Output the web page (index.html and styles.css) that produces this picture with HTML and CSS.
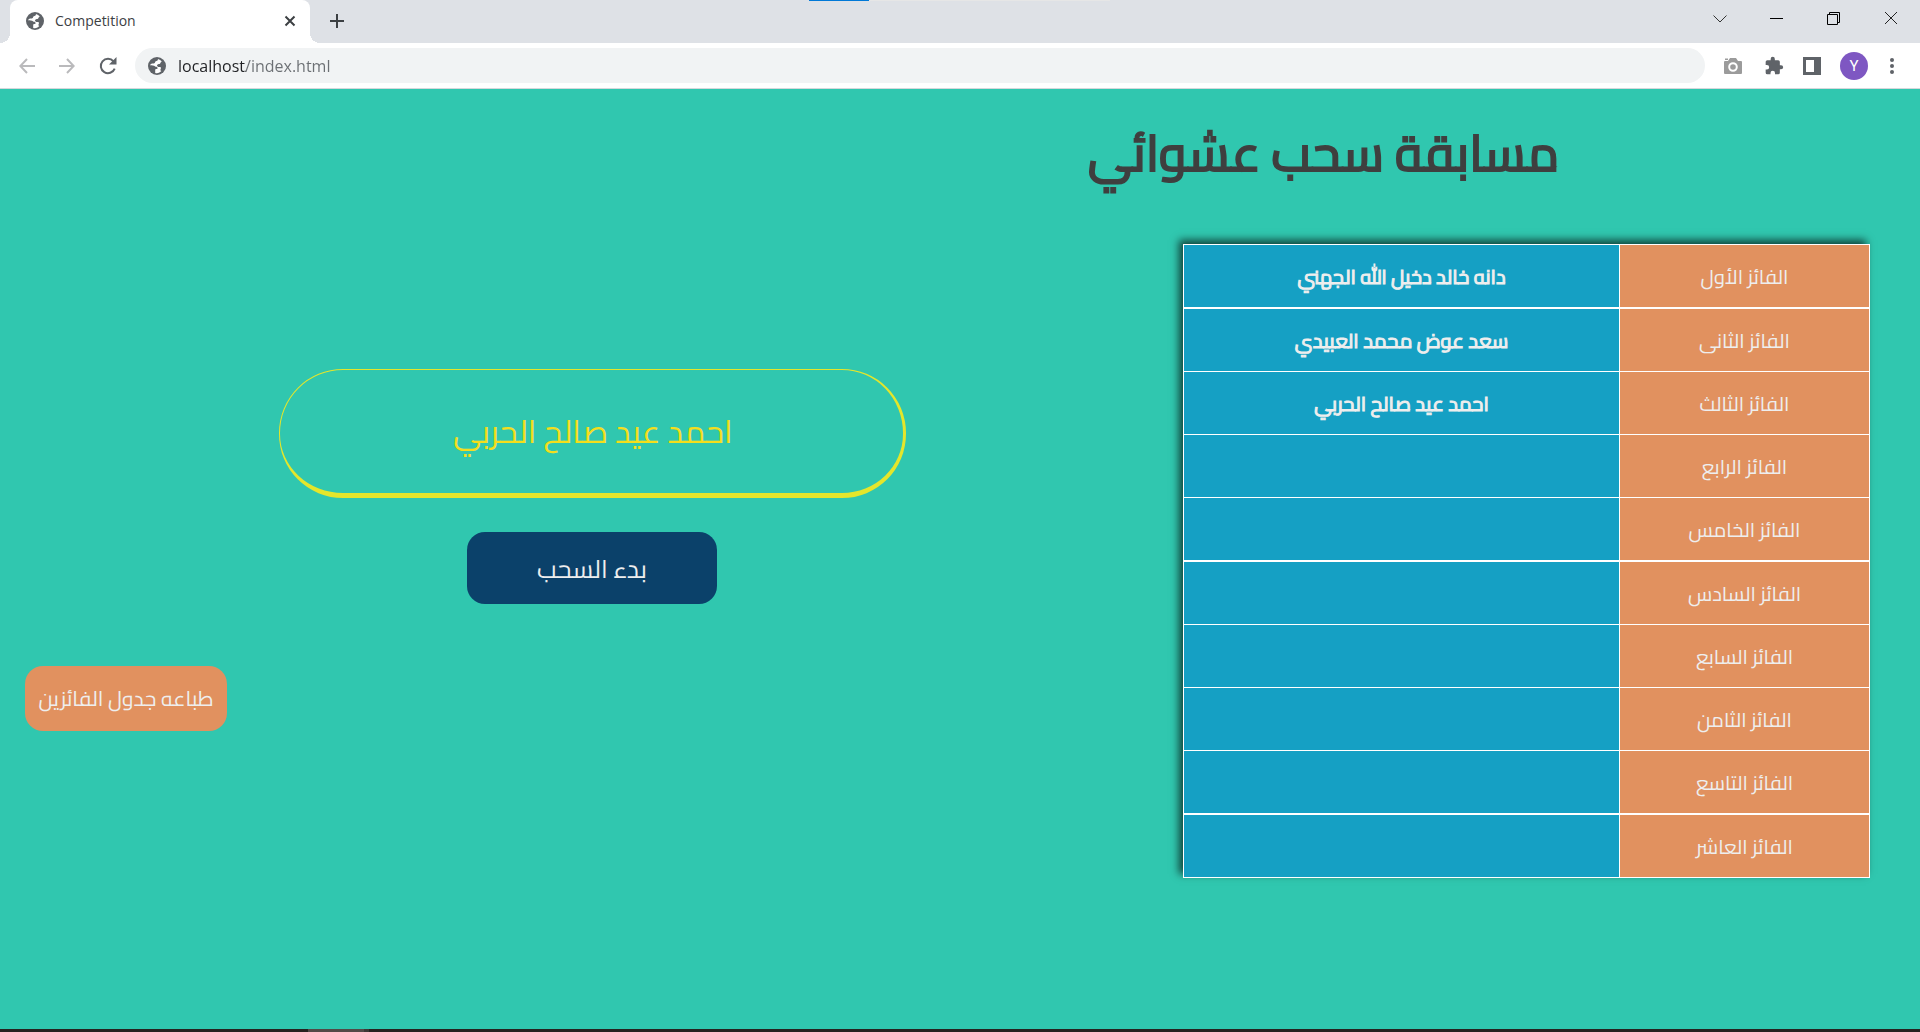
FILE: index.html
```html
<!DOCTYPE html>
<html lang="ar">
<head>
<meta charset="utf-8">
<title>Competition</title>
<link rel="stylesheet" href="styles.css">
</head>
<body>
<svg class="symbols" aria-hidden="true">
  <symbol id="globe" viewBox="0 0 18 18">
    <circle cx="9" cy="9" r="9" fill="#5f6368"/>
    <path fill="#fff" d="M1.900 8.200c2 .1 3.900 0 5.400 1.200.9.700 2.200.4 2.400 1.600.1.900-.9.900-1.700.9-.8.100-.8.900-.8 1.700v2.400c2.500.7 4.700-.3 6.200-1.900-1.300-.3-1-1.600-.6-2.300.4-.7.100-1.500-.6-1.700-1.200-.3-2.600-.1-3.100-1.200-.3-.8.300-1.400 1-1.700.8-.3 2 .2 2.200-.9.200-.9.900-1.200 1.500-1.700-1-1.300-2.300-2.200-3.900-2.600.2 1.100-.3 1.900-1.500 2-.9.100-1.200.7-1.400 1.500-.2.900-1.100.9-1.900.9-1.200-.1-2.500.2-3.200 1.800z"/>
  </symbol>
</svg>

<header class="browser" dir="ltr">
  <div class="tab-strip">
    <span class="progress" aria-hidden="true"></span>
    <div class="tab">
      <svg class="icon-18"><use href="#globe"/></svg>
      <span class="tab-title">Competition</span>
      <button class="plain" aria-label="Close tab"><svg width="12" height="12" viewBox="0 0 12 12"><path d="M1.500 1.500l9 9M10.500 1.500l-9 9" stroke="#3c4043" stroke-width="2"/></svg></button>
    </div>
    <button class="plain new-tab" aria-label="New tab"><svg width="16" height="16" viewBox="0 0 16 16"><path d="M8 1v14M1 8h14" stroke="#3c4043" stroke-width="2"/></svg></button>
    <div class="window-controls">
      <button class="plain" aria-label="Search tabs"><svg width="14" height="14" viewBox="0 0 14 14"><path d="M.5 3.500L7 10l6.500-6.500" fill="none" stroke="#333"/></svg></button>
      <button class="plain" aria-label="Minimize"><svg width="14" height="14" viewBox="0 0 14 14"><path d="M0 6.500h13" stroke="#000"/></svg></button>
      <button class="plain" aria-label="Restore"><svg width="14" height="14" viewBox="0 0 14 14"><path d="M.5 2.500h10v10H.5zM2.500 2.500v-2h10v10h-2" fill="none" stroke="#000"/></svg></button>
      <button class="plain" aria-label="Close"><svg width="14" height="14" viewBox="0 0 14 14"><path d="M1 0l12 12M13 0L1 12" stroke="#222"/></svg></button>
    </div>
  </div>
  <div class="toolbar">
    <div class="nav">
      <button class="plain" aria-label="Back"><svg width="16" height="16" viewBox="0 0 16 16"><path d="M16 8H1.500M8 1L1.300 8 8 15" fill="none" stroke="#bababc" stroke-width="2"/></svg></button>
      <button class="plain" aria-label="Forward"><svg width="16" height="16" viewBox="0 0 16 16"><path d="M0 8h14.500M8 1l6.700 7L8 15" fill="none" stroke="#bababc" stroke-width="2"/></svg></button>
      <button class="plain" aria-label="Reload"><svg width="18" height="18" viewBox="0 0 18 18"><path d="M15.700 11.600A7.200 7.200 0 1 1 14.500 4.300" fill="none" stroke="#5f6368" stroke-width="2"/><path d="M17.500 0v7.500H10z" fill="#5f6368"/></svg></button>
    </div>
    <div class="address">
      <svg class="icon-18"><use href="#globe"/></svg>
      <input class="url" type="text" aria-label="Address" value="localhost/index.html">
    </div>
    <div class="extensions">
      <button class="plain camera" aria-label="Screenshot"><svg width="20" height="18" viewBox="0 0 20 18"><path d="M1 5q0-1 1-1h3l2-3h6l2 3h3q1 0 1 1v11q0 1-1 1H2q-1 0-1-1zM2 1.500h3V3H2z" fill="#9b9b9b"/><circle cx="10" cy="10" r="3.800" fill="none" stroke="#fff" stroke-width="2"/></svg></button>
      <button class="plain" aria-label="Extensions"><svg width="20" height="20" viewBox="0 0 24 24"><path d="M20.500 11H19V7a2 2 0 0 0-2-2h-4V3.500a2.500 2.500 0 0 0-5 0V5H4a2 2 0 0 0-2 2v3.800h1.500a2.700 2.700 0 0 1 0 5.400H2V20a2 2 0 0 0 2 2h3.800v-1.500a2.700 2.700 0 0 1 5.400 0V22H17a2 2 0 0 0 2-2v-4h1.500a2.500 2.500 0 0 0 0-5z" fill="#5f6368"/></svg></button>
      <button class="plain" aria-label="Side panel"><svg width="18" height="18" viewBox="0 0 18 18"><path d="M0 0h18v18H0zM3 3v12h8V3z" fill="#5f6368" fill-rule="evenodd"/></svg></button>
      <button class="plain avatar" aria-label="Profile">Y</button>
      <button class="plain" aria-label="Menu"><svg width="10" height="18" viewBox="0 0 10 18"><g fill="#5f6368"><circle cx="5" cy="3" r="2"/><circle cx="5" cy="9" r="2"/><circle cx="5" cy="15" r="2"/></g></svg></button>
    </div>
  </div>
</header>

<main class="page" dir="rtl">
  <h1 class="title">مسابقة سحب عشوائي</h1>
  <div class="columns">
    <table class="winners">
      <tbody>
        <tr><th scope="row">الفائز الأول</th><td>دانه خالد دخيل الله الجهني</td></tr>
        <tr><th scope="row">الفائز الثانى</th><td>سعد عوض محمد العبيدي</td></tr>
        <tr><th scope="row">الفائز الثالث</th><td>احمد عيد صالح الحربي</td></tr>
        <tr><th scope="row">الفائز الرابع</th><td></td></tr>
        <tr><th scope="row">الفائز الخامس</th><td></td></tr>
        <tr><th scope="row">الفائز السادس</th><td></td></tr>
        <tr><th scope="row">الفائز السابع</th><td></td></tr>
        <tr><th scope="row">الفائز الثامن</th><td></td></tr>
        <tr><th scope="row">الفائز التاسع</th><td></td></tr>
        <tr><th scope="row">الفائز العاشر</th><td></td></tr>
      </tbody>
    </table>
    <section class="draw">
      <p class="drawn-name">احمد عيد صالح الحربي</p>
      <button class="start">بدء السحب</button>
      <button class="print">طباعه جدول الفائزين</button>
    </section>
  </div>
</main>
<footer class="taskbar"><span class="task"></span></footer>
</body>
</html>
```

FILE: styles.css
```css
* { box-sizing: border-box; }

body {
  margin: 0;
  min-height: 100vh;
  display: flex;
  flex-direction: column;
  background: #30c7af;
  font-family: Cairo, "DejaVu Sans", sans-serif;
}

.symbols { position: absolute; width: 0; height: 0; }
.icon-18 { width: 18px; height: 18px; flex: none; }

.plain {
  display: flex;
  align-items: center;
  justify-content: center;
  padding: 0;
  border: 0;
  background: none;
}

/* Browser frame */
.browser { font-family: "Segoe UI", "Open Sans", sans-serif; }

.tab-strip {
  position: relative;
  display: flex;
  height: 43px;
  padding: 0 1px 0 10px;
  background: #dee1e6;
}

.progress {
  position: absolute;
  top: 0;
  left: 809px;
  width: 301px;
  height: 1px;
  background: linear-gradient(90deg, #0078d7 60px, #e6e6e6 60px);
}

.tab {
  position: relative;
  display: flex;
  align-items: center;
  gap: 11px;
  width: 300px;
  padding: 0 14px 2px 16px;
  border-radius: 8px 8px 0 0;
  background: #fff;
}

.tab::before,
.tab::after {
  content: "";
  position: absolute;
  bottom: 0;
  width: 10px;
  height: 10px;
}
.tab::before { right: 100%; background: radial-gradient(circle at 0 0, #dee1e6 10px, #fff 10px); }
.tab::after { left: 100%; background: radial-gradient(circle at 100% 0, #dee1e6 10px, #fff 10px); }

.tab-title { flex: 1; font-size: 14px; color: #3c4043; }
.new-tab { width: 54px; padding-bottom: 2px; }

.window-controls { display: flex; margin-left: auto; height: 38px; }
.window-controls .plain { width: 57px; }

.toolbar {
  display: flex;
  align-items: center;
  height: 46px;
  padding: 0 23px 0 19px;
  border-bottom: 1px solid #d5d8db;
  background: #fff;
}

.nav { display: flex; align-items: center; gap: 24px; margin-right: 18px; }

.address {
  flex: 1;
  display: flex;
  align-items: center;
  gap: 12px;
  height: 35px;
  padding: 0 13px;
  border-radius: 18px;
  background: #f1f3f4;
}

.url {
  flex: 1;
  padding: 0;
  border: 0;
  font-family: inherit;
  font-size: 16px;
  color: transparent;
  background: linear-gradient(90deg, #202124 68px, #6b6f73 68px);
  background-clip: text;
}

.extensions { display: flex; align-items: center; gap: 19px; margin-left: 16px; }
.camera { width: 24px; }

.avatar {
  width: 28px;
  height: 28px;
  border-radius: 50%;
  background: #7e57c2;
  color: #fff;
  font-family: Roboto, sans-serif;
  font-size: 15px;
}

/* Draw page */
.page { flex: 1; padding: 24px 50px 40px 25px; }

.title {
  width: 470px;
  margin: 0 311px 51px 0;
  line-height: 80px;
  font-size: 50px;
  font-weight: 400;
  -webkit-text-stroke: 2px #3f3f3f;
  white-space: nowrap;
  color: #3f3f3f;
}

.columns {
  display: grid;
  grid-template-columns: 687fr 1134fr;
  gap: 24px;
}

.winners {
  width: 100%;
  table-layout: fixed;
  border-collapse: separate;
  border-spacing: 0;
  border: 1px solid #fff;
  border-bottom: 0;
  box-shadow: -4px -4px 8px #000a;
  color: #eee;
}

.winners th,
.winners td {
  height: 63px;
  padding: 1px 10px 0;
  border-bottom: 1px solid #fff;
  text-align: center;
  line-height: 30px;
  font-size: 20px;
  font-weight: 400;
}

.winners tr:nth-child(4n + 1) > * { height: 64px; border-bottom-width: 2px; }
.winners th { width: 249px; background: #e1915f; }
.winners td { border-right: 1px solid #fff; background: #15a0c4; -webkit-text-stroke: 1px #eee; }

.draw {
  display: flex;
  flex-direction: column;
  align-items: center;
  padding-top: 125px;
}

.drawn-name {
  width: 627px;
  max-width: 100%;
  margin: 0 0 34px;
  padding: 31px 0 32px 4px;
  border: 1px solid #e4e62b;
  border-right-width: 3px;
  border-bottom-width: 5px;
  border-radius: 64px;
  line-height: 60px;
  font-size: 32px;
  text-align: center;
  color: #f4de1c;
}

.start,
.print {
  border: 0;
  border-radius: 18px;
  font-family: inherit;
  color: #eee;
}

.start { width: 250px; height: 72px; background: #0b416a; font-size: 25px; }

.print {
  align-self: flex-end;
  width: 202px;
  height: 65px;
  margin-top: 62px;
  padding: 0;
  background: #e1915f;
  font-size: 21px;
}

.taskbar { height: 3px; padding-left: 308px; background: #26221f; }
.task { display: block; width: 61px; height: 3px; border-right: 5px solid #3d3835; background: #524a47; }
```
